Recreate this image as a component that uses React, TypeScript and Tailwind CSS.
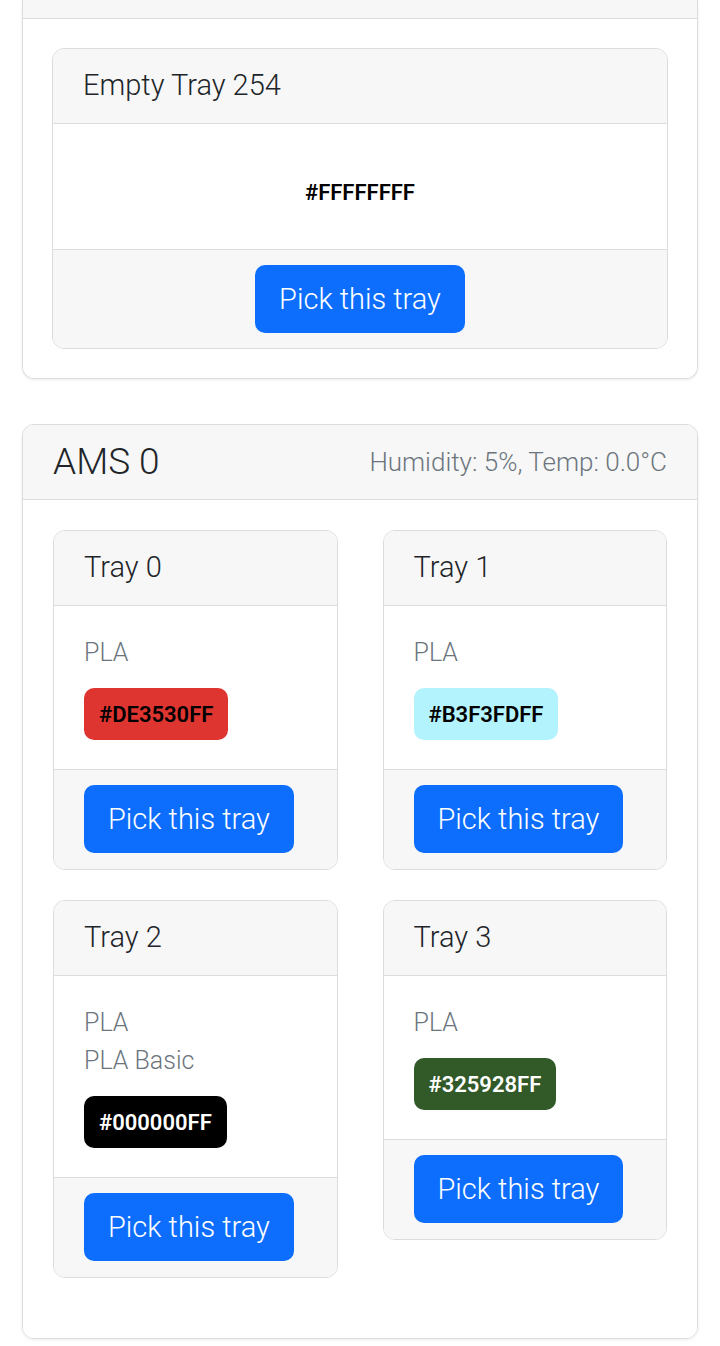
import React from 'react';

type Tray = {
  name: string;
  types: string[];
  color: string;
  bg: string;
  text: string;
};

const trays: Tray[] = [
  { name: 'Tray 0', types: ['PLA'], color: '#DE3530FF', bg: 'bg-[#de3530]', text: 'text-black' },
  { name: 'Tray 1', types: ['PLA'], color: '#B3F3FDFF', bg: 'bg-[#b3f3fd]', text: 'text-black' },
  { name: 'Tray 2', types: ['PLA', 'PLA Basic'], color: '#000000FF', bg: 'bg-black', text: 'text-white' },
  { name: 'Tray 3', types: ['PLA'], color: '#325928FF', bg: 'bg-[#325928]', text: 'text-white' },
];

function PickButton() {
  return (
    <button className="h-[68px] px-[24px] rounded-[10px] bg-[#0d6efd] text-white text-[29px] font-light leading-none">
      Pick this tray
    </button>
  );
}

function Badge({ tray }: { tray: Tray }) {
  return (
    <span
      className={`inline-flex items-center h-[52px] px-[15px] rounded-[10px] text-[22px] font-semibold ${tray.bg} ${tray.text}`}
    >
      {tray.color}
    </span>
  );
}

function TrayCard({ tray }: { tray: Tray }) {
  return (
    <div className="border border-[#dcdcdc] rounded-[12px] overflow-hidden">
      <div className="h-[75px] flex items-center px-[30px] bg-[#f7f7f7] border-b border-[#dcdcdc] text-[29px] font-light text-[#212529]">
        {tray.name}
      </div>
      <div className="px-[30px] pt-[28px] pb-[29px] bg-white">
        {tray.types.map((t) => (
          <div key={t} className="text-[25px] leading-[38px] font-light text-[#6c757d]">
            {t}
          </div>
        ))}
        <div className="mt-[16px]">
          <Badge tray={tray} />
        </div>
      </div>
      <div className="px-[30px] pt-[15px] pb-[16px] bg-[#f7f7f7] border-t border-[#dcdcdc]">
        <PickButton />
      </div>
    </div>
  );
}

export default function App() {
  return (
    <div
      className="min-h-screen bg-white px-[22px] pb-[10px]"
      style={{ fontFamily: 'Roboto, "Open Sans", sans-serif' }}
    >
      <div className="border border-t-0 border-[#dcdcdc] rounded-b-[12px] shadow-[0_1px_3px_rgba(0,0,0,0.08)]">
        <div className="h-[19px] bg-[#f7f7f7] border-b border-[#dcdcdc]" />
        <div className="p-[29px] bg-white rounded-b-[12px]">
          <div className="border border-[#dcdcdc] rounded-[12px] overflow-hidden">
            <div className="h-[75px] flex items-center px-[30px] bg-[#f7f7f7] border-b border-[#dcdcdc] text-[29px] font-light text-[#212529]">
              Empty Tray 254
            </div>
            <div className="h-[125px] flex items-center justify-center pt-[12px] bg-white">
              <span className="text-[22px] font-semibold text-black">#FFFFFFFF</span>
            </div>
            <div className="py-[15px] flex justify-center bg-[#f7f7f7] border-t border-[#dcdcdc]">
              <PickButton />
            </div>
          </div>
        </div>
      </div>

      <div className="mt-[45px] border border-[#dcdcdc] rounded-[12px] overflow-hidden shadow-[0_1px_3px_rgba(0,0,0,0.08)]">
        <div className="h-[75px] flex items-center justify-between px-[30px] bg-[#f7f7f7] border-b border-[#dcdcdc]">
          <span className="text-[37px] font-light text-[#212529]">AMS 0</span>
          <span className="text-[26px] font-light text-[#6c757d]">Humidity: 5%, Temp: 0.0°C</span>
        </div>
        <div className="px-[30px] pt-[30px] pb-[30px] bg-white grid grid-cols-2 gap-x-[45px] items-start">
          {trays.map((tray) => (
            <div key={tray.name} className="mb-[30px]">
              <TrayCard tray={tray} />
            </div>
          ))}
        </div>
      </div>
    </div>
  );
}
